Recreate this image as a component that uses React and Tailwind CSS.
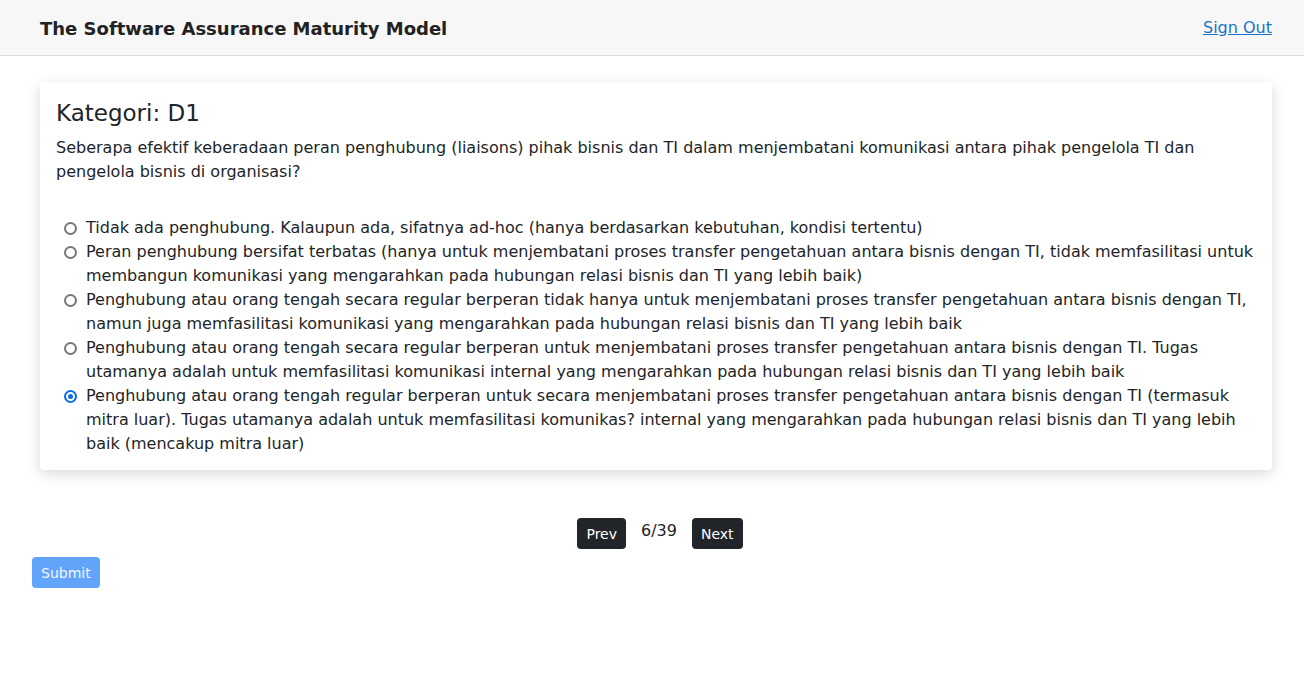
import React from 'react';

const options = [
  'Tidak ada penghubung. Kalaupun ada, sifatnya ad-hoc (hanya berdasarkan kebutuhan, kondisi tertentu)',
  'Peran penghubung bersifat terbatas (hanya untuk menjembatani proses transfer pengetahuan antara bisnis dengan TI, tidak memfasilitasi untuk membangun komunikasi yang mengarahkan pada hubungan relasi bisnis dan TI yang lebih baik)',
  'Penghubung atau orang tengah secara regular berperan tidak hanya untuk menjembatani proses transfer pengetahuan antara bisnis dengan TI, namun juga memfasilitasi komunikasi yang mengarahkan pada hubungan relasi bisnis dan TI yang lebih baik',
  'Penghubung atau orang tengah secara regular berperan untuk menjembatani proses transfer pengetahuan antara bisnis dengan TI. Tugas utamanya adalah untuk memfasilitasi komunikasi internal yang mengarahkan pada hubungan relasi bisnis dan TI yang lebih baik',
  'Penghubung atau orang tengah regular berperan untuk secara menjembatani proses transfer pengetahuan antara bisnis dengan TI (termasuk mitra luar). Tugas utamanya adalah untuk memfasilitasi komunikas? internal yang mengarahkan pada hubungan relasi bisnis dan TI yang lebih baik (mencakup mitra luar)',
];

function Radio({ checked }) {
  return (
    <span
      className={
        'mt-[6px] h-[13px] w-[13px] shrink-0 rounded-full border-2 flex items-center justify-center ' +
        (checked ? 'border-[#0b6bea]' : 'border-[#777]')
      }
    >
      {checked && <span className="h-[5px] w-[5px] rounded-full bg-[#0b6bea]" />}
    </span>
  );
}

export default function App() {
  return (
    <div className="min-h-screen bg-white text-[#212529]" style={{ fontFamily: '"DejaVu Sans", sans-serif' }}>
      <header className="h-[56px] bg-[#f7f7f7] border-b border-[#dcdcdc] flex items-center justify-between pl-10 pr-8">
        <h1 className="text-[18px] font-bold text-[#222] pt-[2px]">The Software Assurance Maturity Model</h1>
        <a href="#" className="text-[16px] text-[#1a73c8] underline">Sign Out</a>
      </header>

      <main className="pl-10 pr-8 pt-[26px]">
        <div className="bg-white rounded shadow-[0_4px_14px_rgba(0,0,0,0.15)] px-4 pt-[14px] pb-[14px]">
          <h2 className="text-[23px] leading-[34px] mb-[6px]">Kategori: D1</h2>
          <p className="text-[16px] leading-[24px]">
            Seberapa efektif keberadaan peran penghubung (liaisons) pihak bisnis dan TI dalam menjembatani komunikasi antara pihak pengelola TI dan pengelola bisnis di organisasi?
          </p>
          <div className="mt-[32px] flex flex-col">
            {options.map((o, i) => (
              <label key={i} className="flex gap-[9px] pl-2 text-[16px] leading-[24px]">
                <Radio checked={i === 4} />
                <span>{o}</span>
              </label>
            ))}
          </div>
        </div>

        <div className="flex items-center justify-center gap-[15px] mt-[48px] ml-[8px]">
          <button className="bg-[#212529] text-white text-[14px] rounded px-[9px] h-[31px] pt-[2px]">Prev</button>
          <span className="text-[16px] -mt-[6px]">6/39</span>
          <button className="bg-[#212529] text-white text-[14px] rounded px-[9px] h-[31px] pt-[2px]">Next</button>
        </div>
      </main>

      <div className="pl-8 mt-2">
        <button className="bg-[#62a4fa] text-white/90 text-[14px] rounded px-[9px] h-[31px] pt-[2px]">Submit</button>
      </div>
    </div>
  );
}
